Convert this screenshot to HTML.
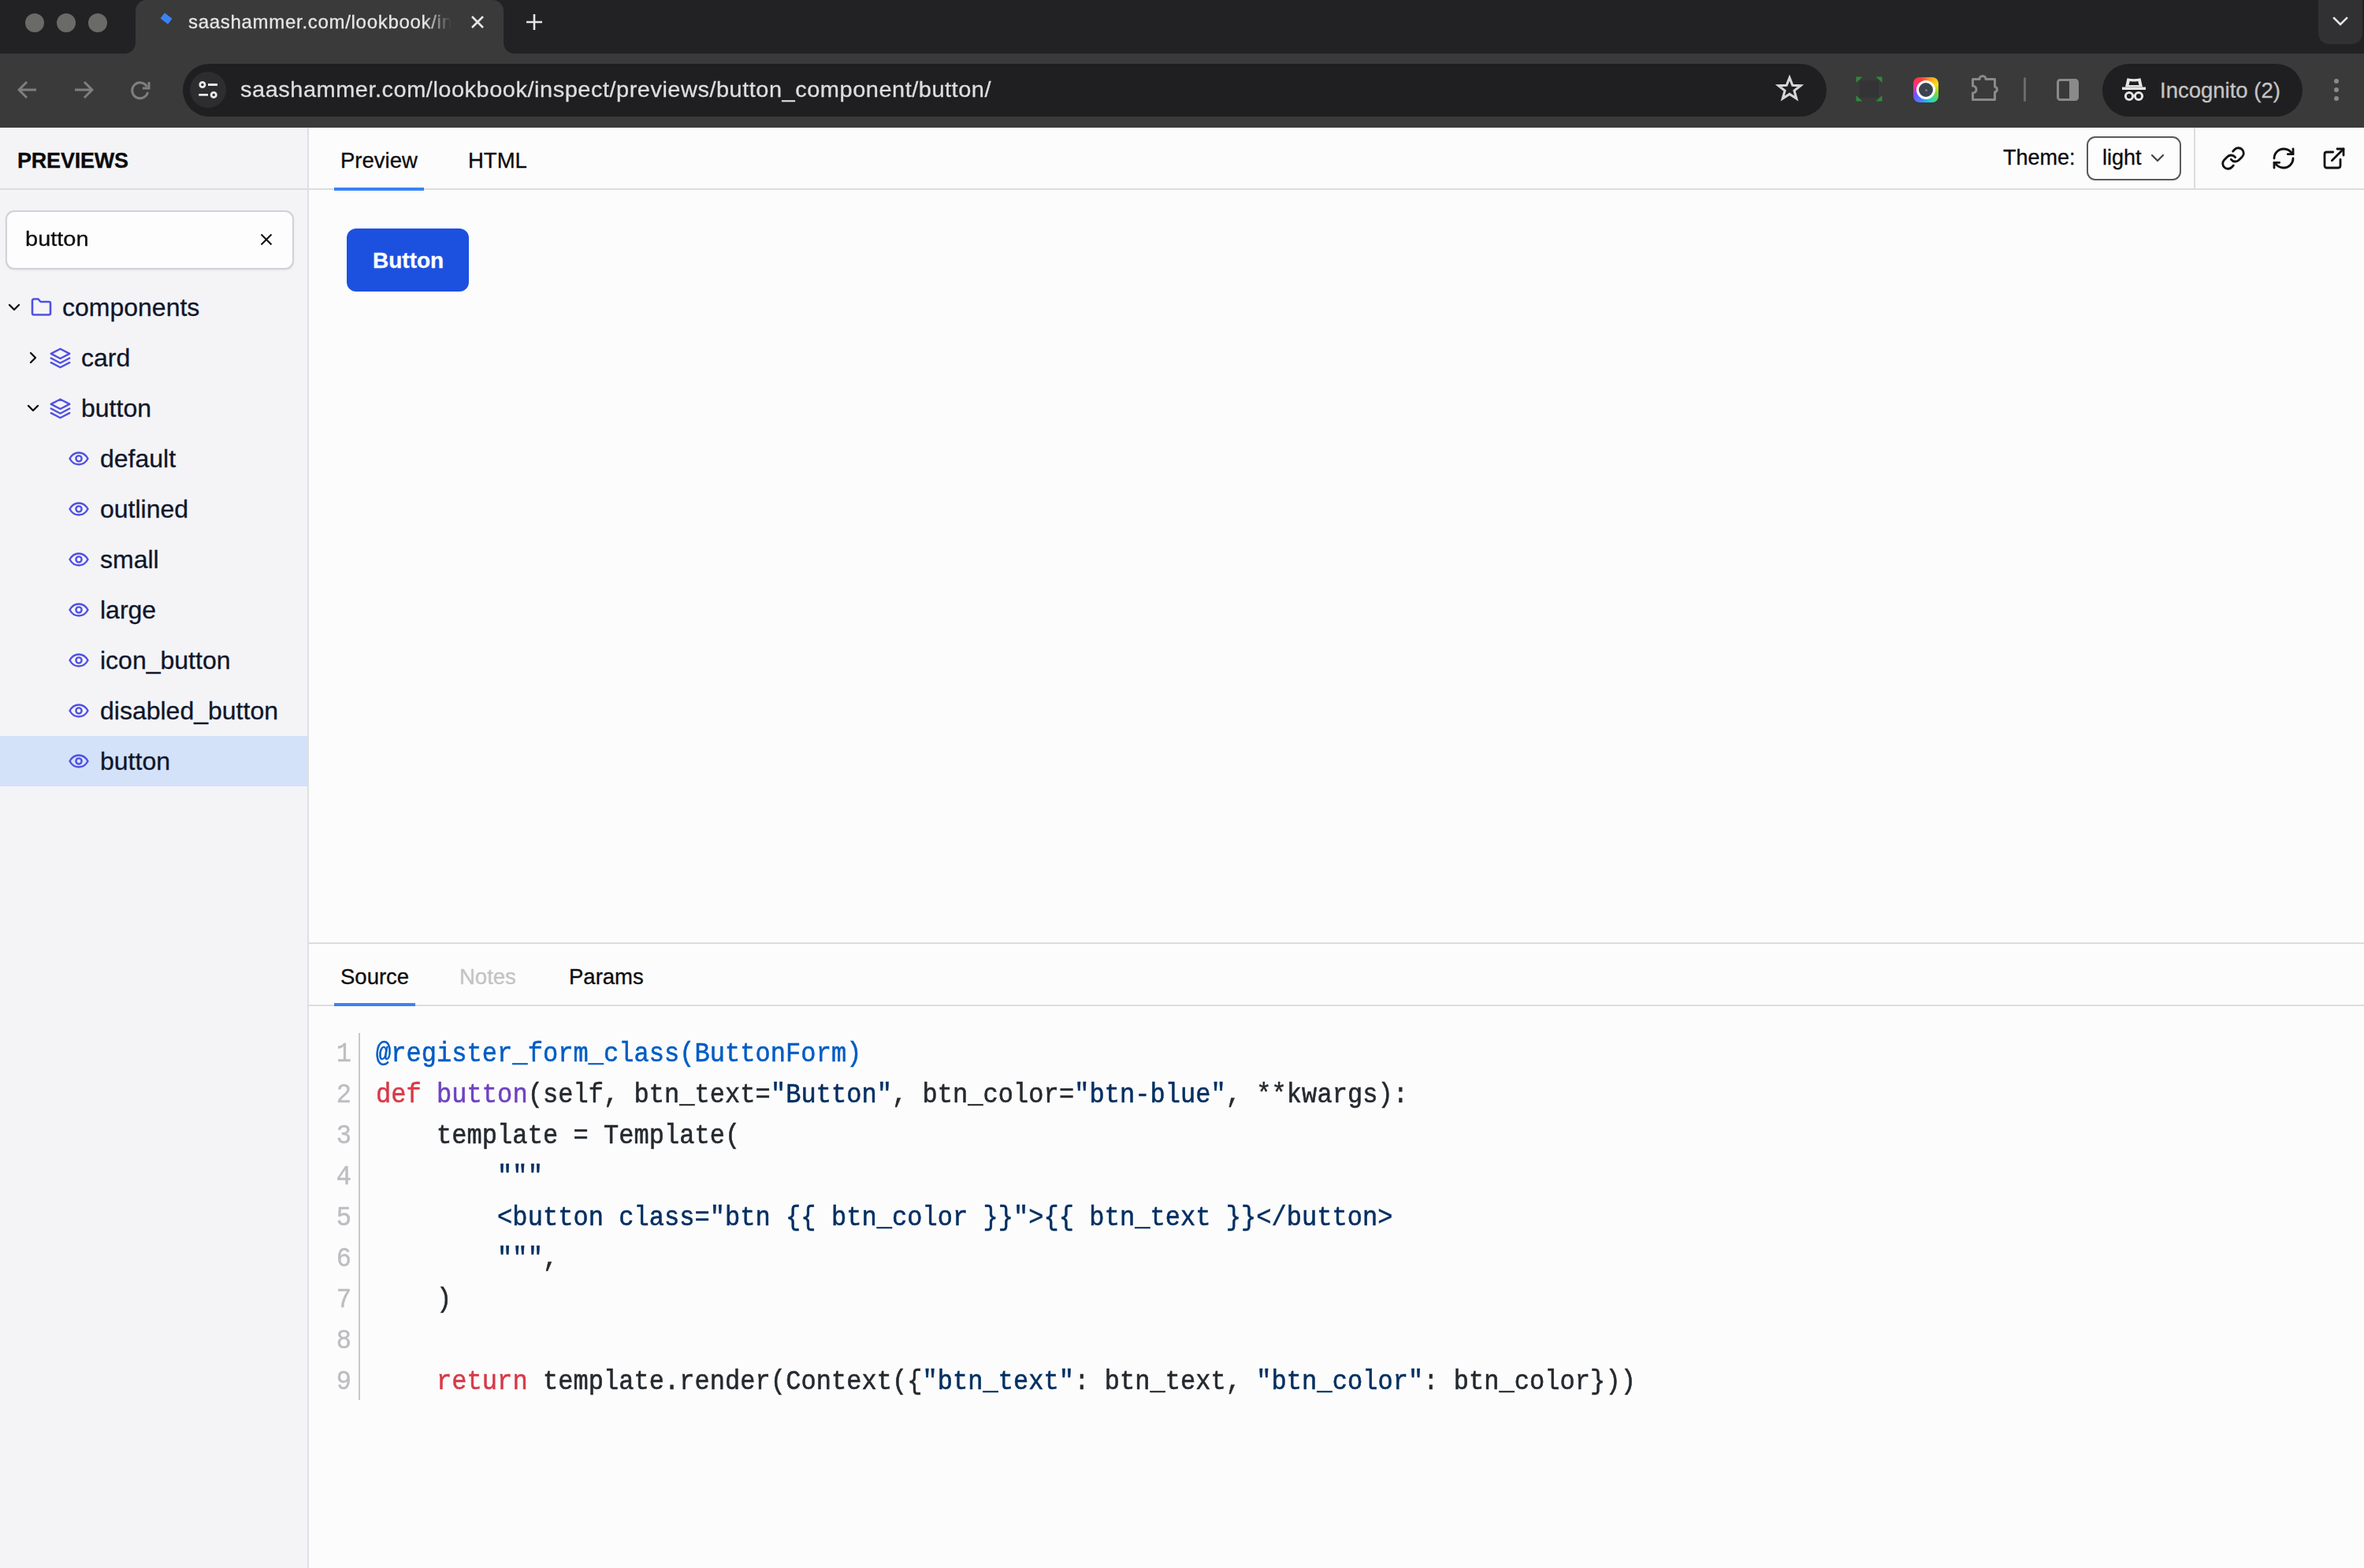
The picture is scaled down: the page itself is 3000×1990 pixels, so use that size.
<!DOCTYPE html>
<html><head><meta charset="utf-8">
<style>
*{box-sizing:border-box;margin:0;padding:0}
html,body{width:3000px;height:1990px;overflow:hidden;background:#fcfcfc;font-family:"Liberation Sans",sans-serif}
.r{position:absolute;display:block}
.t{position:absolute;white-space:nowrap;line-height:1;-webkit-text-stroke:0.3px currentColor}
</style></head>
<body>
<div class="r" style="left:0px;top:0px;width:3000px;height:68px;background:#222224;"></div>
<div class="r" style="left:0px;top:68px;width:3000px;height:94px;background:#3a3a3a;"></div>
<div class="r" style="left:172px;top:0px;width:467px;height:68px;background:#3a3a3a;border-radius:14px 14px 0 0"></div>
<div class="r" style="left:158px;top:50px;width:14px;height:18px;background:#3a3a3a;"></div>
<div class="r" style="left:156px;top:36px;width:16px;height:32px;background:#222224;border-bottom-right-radius:14px"></div>
<div class="r" style="left:639px;top:50px;width:14px;height:18px;background:#3a3a3a;"></div>
<div class="r" style="left:639px;top:36px;width:16px;height:32px;background:#222224;border-bottom-left-radius:14px"></div>
<div class="r" style="left:32px;top:17px;width:24px;height:24px;background:#6a6a68;border-radius:50%"></div>
<div class="r" style="left:72px;top:17px;width:24px;height:24px;background:#6a6a68;border-radius:50%"></div>
<div class="r" style="left:112px;top:17px;width:24px;height:24px;background:#6a6a68;border-radius:50%"></div>
<div class="r" style="left:205px;top:19px;width:12px;height:9px;background:#3b82f6;transform:rotate(38deg);border-radius:1px"></div>
<div class="t " style="left:239.0px;top:15.7px;font-size:24px;color:#e6e6e6;font-weight:normal;font-family:'Liberation Sans',sans-serif;width:336px;overflow:hidden;-webkit-mask-image:linear-gradient(90deg,#000 300px,transparent 334px);letter-spacing:0.7px">saashammer.com/lookbook/inspect</div>
<svg class="r" style="left:597px;top:19px;" width="18" height="18" viewBox="0 0 18 18" ><path d="M2 2L16 16M16 2L2 16" stroke="#e6e6e6" stroke-width="2.6" stroke-linecap="butt"/></svg>
<svg class="r" style="left:667px;top:17px;" width="22" height="22" viewBox="0 0 22 22" ><path d="M11 1V21M1 11H21" stroke="#e6e6e6" stroke-width="2.6"/></svg>
<div class="r" style="left:2942px;top:-14px;width:56px;height:70px;background:#313133;border-radius:14px"></div>
<svg class="r" style="left:2960px;top:21px;" width="20" height="14" viewBox="0 0 20 14" ><path d="M2 2L10 10L18 2" stroke="#e6e6e6" stroke-width="2.6" fill="none" stroke-linecap="square" stroke-linejoin="miter"/></svg>
<svg class="r" style="left:22px;top:102px;" width="26" height="24" viewBox="0 0 26 24" ><path d="M24 12H3M12 2L2 12L12 22" stroke="#7f7f7f" stroke-width="3" fill="none" stroke-linejoin="miter"/></svg>
<svg class="r" style="left:93px;top:102px;" width="26" height="24" viewBox="0 0 26 24" ><path d="M2 12H23M14 2L24 12L14 22" stroke="#7f7f7f" stroke-width="3" fill="none"/></svg>
<svg class="r" style="left:165px;top:101px;" width="27" height="26" viewBox="0 0 27 26" ><path d="M21.5 9A10 10 0 1 0 22.5 16" stroke="#7f7f7f" stroke-width="3" fill="none"/><path d="M24 3V11H16" stroke="#7f7f7f" stroke-width="3" fill="none"/></svg>
<div class="r" style="left:232px;top:81px;width:2086px;height:67px;background:#1f1f21;border-radius:34px"></div>
<div class="r" style="left:241px;top:91px;width:46px;height:46px;background:#2d2d2f;border-radius:50%"></div>
<svg class="r" style="left:248px;top:98px;" width="32" height="32" viewBox="0 0 32 32" ><circle cx="8.9" cy="9.5" r="3.1" stroke="#e8e8e8" stroke-width="2.8" fill="none"/><path d="M16 9.5H28M4.2 22.4H16" stroke="#e8e8e8" stroke-width="2.9"/><circle cx="23.2" cy="22.4" r="3.1" stroke="#e8e8e8" stroke-width="2.8" fill="none"/></svg>
<div class="t " style="left:305.0px;top:99.4px;font-size:29px;color:#dedede;font-weight:normal;font-family:'Liberation Sans',sans-serif;letter-spacing:0.5px;transform:scaleY(0.94);transform-origin:0 24.5px">saashammer.com/lookbook/inspect/previews/button_component/button/</div>
<svg class="r" style="left:2253px;top:95px;" width="36" height="35" viewBox="0 0 24 24" ><path d="M12 2.5L14.6 9.1L21.6 9.4L16.1 13.8L18 20.6L12 16.7L6 20.6L7.9 13.8L2.4 9.4L9.4 9.1Z" stroke="#d6d6d6" stroke-width="2.1" fill="none" stroke-linejoin="miter"/></svg>
<div class="r" style="left:2360px;top:102px;width:24px;height:22px;background:#343436;"></div>
<svg class="r" style="left:2355px;top:97px;" width="34" height="32" viewBox="0 0 34 32" ><path d="M0.5 0.5H8.5L0.5 8Z M33.5 0.5H25.5L33.5 8Z M0.5 31.5H8.5L0.5 24Z M33.5 31.5H25.5L33.5 24Z" fill="#2f8a3a"/></svg>
<div class="r" style="left:2428px;top:98px;width:32px;height:32px;background:conic-gradient(from 200deg, #3a8dff, #7a4dff, #ff2a8a, #ff3b3b, #ff9a1f, #f3e21a, #7ad93a, #1fd6c8, #3a8dff);border-radius:8px"></div>
<div class="r" style="left:2432px;top:102px;width:24px;height:24px;background:#3a4350;border-radius:50%;border:3px solid #ffffff"></div>
<div class="r" style="left:2442.5px;top:112.5px;width:3px;height:3px;background:#6b7a88;border-radius:50%"></div>
<svg class="r" style="left:2500px;top:95px;" width="36" height="34" viewBox="0 0 36 34" ><path d="M3.5 5.5H12A4 4 0 0 1 20 5.5H31.5V15A3.6 3.6 0 0 1 31.5 22V31.5H3.5V23A4.5 4.5 0 0 0 3.5 14Z" stroke="#8a8a8a" stroke-width="3" fill="none" stroke-linejoin="round"/></svg>
<div class="r" style="left:2568px;top:98px;width:3px;height:31px;background:#6a6a6a;border-radius:2px"></div>
<svg class="r" style="left:2609px;top:99px;" width="30" height="30" viewBox="0 0 30 30" ><rect x="2.5" y="2.5" width="25" height="25" rx="3" stroke="#8a8a8a" stroke-width="3" fill="none"/><path d="M17 2.5H24.5A3 3 0 0 1 27.5 5.5V24.5A3 3 0 0 1 24.5 27.5H17Z" fill="#8a8a8a"/></svg>
<div class="r" style="left:2668px;top:81px;width:254px;height:67px;background:#1f1f21;border-radius:34px"></div>
<svg class="r" style="left:2690px;top:97px;" width="36" height="34" viewBox="0 0 36 34" ><path d="M7 13.5L9.5 2.2Q18 4.2 26.5 2.2L29 13.5Z" fill="#e6e6e6"/><path d="M11.5 11L12.8 6Q18 7.2 23.2 6L24.5 11Z" fill="#1f1f21"/><rect x="3" y="13.5" width="30" height="3.5" fill="#e6e6e6"/><circle cx="12" cy="25" r="4.6" stroke="#e6e6e6" stroke-width="3" fill="none"/><circle cx="24" cy="25" r="4.6" stroke="#e6e6e6" stroke-width="3" fill="none"/><path d="M16 24.5H20" stroke="#e6e6e6" stroke-width="2.5"/></svg>
<div class="t " style="left:2741.0px;top:100.7px;font-size:27.5px;color:#c4c4c4;font-weight:normal;font-family:'Liberation Sans',sans-serif;">Incognito (2)</div>
<div class="r" style="left:2962px;top:100px;width:6px;height:6px;background:#8a8a8a;border-radius:50%"></div>
<div class="r" style="left:2962px;top:111px;width:6px;height:6px;background:#8a8a8a;border-radius:50%"></div>
<div class="r" style="left:2962px;top:122px;width:6px;height:6px;background:#8a8a8a;border-radius:50%"></div>
<div class="r" style="left:0px;top:162px;width:3000px;height:1828px;background:#fcfcfc;"></div>
<div class="r" style="left:0px;top:162px;width:390px;height:1828px;background:#f4f4f7;"></div>
<div class="r" style="left:390px;top:162px;width:2px;height:1828px;background:#dedfe3;"></div>
<div class="r" style="left:0px;top:239px;width:390px;height:2px;background:#dcdde0;"></div>
<div class="t " style="left:22.0px;top:191.1px;font-size:27px;color:#0b0b0b;font-weight:bold;font-family:'Liberation Sans',sans-serif;letter-spacing:-0.2px">PREVIEWS</div>
<div class="r" style="left:7px;top:267px;width:366px;height:75px;background:#fdfdfe;border:2px solid #cfd2d8;border-radius:11px;box-shadow:0 1px 2px rgba(0,0,0,0.08)"></div>
<div class="t " style="left:32.0px;top:288.4px;font-size:29px;color:#0b0b0b;font-weight:normal;font-family:'Liberation Sans',sans-serif;transform:scaleY(0.9);transform-origin:0 24.5px">button</div>
<svg class="r" style="left:330px;top:296px;" width="16" height="16" viewBox="0 0 16 16" ><path d="M1.5 1.5L14.5 14.5M14.5 1.5L1.5 14.5" stroke="#111" stroke-width="2.1"/></svg>
<div class="r" style="left:0px;top:934px;width:390px;height:64px;background:#d4e2f9;"></div>
<svg class="r" style="left:10px;top:385px;" width="16" height="10" viewBox="0 0 16 10" ><path d="M2 2L8 8L14 2" stroke="#111" stroke-width="2.4" fill="none" stroke-linecap="round" stroke-linejoin="round"/></svg>
<svg class="r" style="left:39px;top:378px;" width="27" height="23" viewBox="0 0 27 23" ><path d="M2 3.5A2 2 0 0 1 4 1.5H9.5L12.5 5H23A2 2 0 0 1 25 7V19.5A2 2 0 0 1 23 21.5H4A2 2 0 0 1 2 19.5Z" stroke="#5050e4" stroke-width="2.6" fill="none" stroke-linejoin="round"/></svg>
<div class="t " style="left:79.0px;top:373.9px;font-size:32px;color:#0f1629;font-weight:normal;font-family:'Liberation Sans',sans-serif;">components</div>
<svg class="r" style="left:37px;top:446px;" width="10" height="16" viewBox="0 0 10 16" ><path d="M2 2L8 8L2 14" stroke="#111" stroke-width="2.4" fill="none" stroke-linecap="round" stroke-linejoin="round"/></svg>
<svg class="r" style="left:63px;top:441px;" width="27" height="27" viewBox="0 0 24 24" ><path d="M12 1.5L1.5 7L12 12.5L22.5 7Z" stroke="#5050e4" stroke-width="2.1" fill="none" stroke-linejoin="round"/><path d="M1.5 17L12 22.5L22.5 17M1.5 12L12 17.5L22.5 12" stroke="#5050e4" stroke-width="2.1" fill="none" stroke-linejoin="round" stroke-linecap="round"/></svg>
<div class="t " style="left:103.0px;top:437.9px;font-size:32px;color:#0f1629;font-weight:normal;font-family:'Liberation Sans',sans-serif;">card</div>
<svg class="r" style="left:34px;top:513px;" width="16" height="10" viewBox="0 0 16 10" ><path d="M2 2L8 8L14 2" stroke="#111" stroke-width="2.4" fill="none" stroke-linecap="round" stroke-linejoin="round"/></svg>
<svg class="r" style="left:63px;top:505px;" width="27" height="27" viewBox="0 0 24 24" ><path d="M12 1.5L1.5 7L12 12.5L22.5 7Z" stroke="#5050e4" stroke-width="2.1" fill="none" stroke-linejoin="round"/><path d="M1.5 17L12 22.5L22.5 17M1.5 12L12 17.5L22.5 12" stroke="#5050e4" stroke-width="2.1" fill="none" stroke-linejoin="round" stroke-linecap="round"/></svg>
<div class="t " style="left:103.0px;top:501.9px;font-size:32px;color:#0f1629;font-weight:normal;font-family:'Liberation Sans',sans-serif;">button</div>
<svg class="r" style="left:87px;top:573px;" width="26" height="18" viewBox="0 0 26 18" ><path d="M1.5 9C4.5 3.5 8.5 1.5 13 1.5S21.5 3.5 24.5 9C21.5 14.5 17.5 16.5 13 16.5S4.5 14.5 1.5 9Z" stroke="#5050e4" stroke-width="2.4" fill="none"/><circle cx="13" cy="9" r="3.6" stroke="#5050e4" stroke-width="2.4" fill="none"/></svg>
<div class="t " style="left:127.0px;top:565.9px;font-size:32px;color:#0f1629;font-weight:normal;font-family:'Liberation Sans',sans-serif;">default</div>
<svg class="r" style="left:87px;top:637px;" width="26" height="18" viewBox="0 0 26 18" ><path d="M1.5 9C4.5 3.5 8.5 1.5 13 1.5S21.5 3.5 24.5 9C21.5 14.5 17.5 16.5 13 16.5S4.5 14.5 1.5 9Z" stroke="#5050e4" stroke-width="2.4" fill="none"/><circle cx="13" cy="9" r="3.6" stroke="#5050e4" stroke-width="2.4" fill="none"/></svg>
<div class="t " style="left:127.0px;top:629.9px;font-size:32px;color:#0f1629;font-weight:normal;font-family:'Liberation Sans',sans-serif;">outlined</div>
<svg class="r" style="left:87px;top:701px;" width="26" height="18" viewBox="0 0 26 18" ><path d="M1.5 9C4.5 3.5 8.5 1.5 13 1.5S21.5 3.5 24.5 9C21.5 14.5 17.5 16.5 13 16.5S4.5 14.5 1.5 9Z" stroke="#5050e4" stroke-width="2.4" fill="none"/><circle cx="13" cy="9" r="3.6" stroke="#5050e4" stroke-width="2.4" fill="none"/></svg>
<div class="t " style="left:127.0px;top:693.9px;font-size:32px;color:#0f1629;font-weight:normal;font-family:'Liberation Sans',sans-serif;">small</div>
<svg class="r" style="left:87px;top:765px;" width="26" height="18" viewBox="0 0 26 18" ><path d="M1.5 9C4.5 3.5 8.5 1.5 13 1.5S21.5 3.5 24.5 9C21.5 14.5 17.5 16.5 13 16.5S4.5 14.5 1.5 9Z" stroke="#5050e4" stroke-width="2.4" fill="none"/><circle cx="13" cy="9" r="3.6" stroke="#5050e4" stroke-width="2.4" fill="none"/></svg>
<div class="t " style="left:127.0px;top:757.9px;font-size:32px;color:#0f1629;font-weight:normal;font-family:'Liberation Sans',sans-serif;">large</div>
<svg class="r" style="left:87px;top:829px;" width="26" height="18" viewBox="0 0 26 18" ><path d="M1.5 9C4.5 3.5 8.5 1.5 13 1.5S21.5 3.5 24.5 9C21.5 14.5 17.5 16.5 13 16.5S4.5 14.5 1.5 9Z" stroke="#5050e4" stroke-width="2.4" fill="none"/><circle cx="13" cy="9" r="3.6" stroke="#5050e4" stroke-width="2.4" fill="none"/></svg>
<div class="t " style="left:127.0px;top:821.9px;font-size:32px;color:#0f1629;font-weight:normal;font-family:'Liberation Sans',sans-serif;">icon_button</div>
<svg class="r" style="left:87px;top:893px;" width="26" height="18" viewBox="0 0 26 18" ><path d="M1.5 9C4.5 3.5 8.5 1.5 13 1.5S21.5 3.5 24.5 9C21.5 14.5 17.5 16.5 13 16.5S4.5 14.5 1.5 9Z" stroke="#5050e4" stroke-width="2.4" fill="none"/><circle cx="13" cy="9" r="3.6" stroke="#5050e4" stroke-width="2.4" fill="none"/></svg>
<div class="t " style="left:127.0px;top:885.9px;font-size:32px;color:#0f1629;font-weight:normal;font-family:'Liberation Sans',sans-serif;">disabled_button</div>
<svg class="r" style="left:87px;top:957px;" width="26" height="18" viewBox="0 0 26 18" ><path d="M1.5 9C4.5 3.5 8.5 1.5 13 1.5S21.5 3.5 24.5 9C21.5 14.5 17.5 16.5 13 16.5S4.5 14.5 1.5 9Z" stroke="#5050e4" stroke-width="2.4" fill="none"/><circle cx="13" cy="9" r="3.6" stroke="#5050e4" stroke-width="2.4" fill="none"/></svg>
<div class="t " style="left:127.0px;top:949.9px;font-size:32px;color:#0f1629;font-weight:normal;font-family:'Liberation Sans',sans-serif;">button</div>
<div class="r" style="left:392px;top:239px;width:2608px;height:2px;background:#dcdde0;"></div>
<div class="t " style="left:432.0px;top:190.2px;font-size:27.5px;color:#0b0b0b;font-weight:normal;font-family:'Liberation Sans',sans-serif;">Preview</div>
<div class="r" style="left:424px;top:238px;width:114px;height:4px;background:#3b82f6;"></div>
<div class="t " style="left:594.0px;top:190.2px;font-size:27.5px;color:#0b0b0b;font-weight:normal;font-family:'Liberation Sans',sans-serif;">HTML</div>
<div class="t " style="left:2542.0px;top:186.6px;font-size:27px;color:#0b0b0b;font-weight:normal;font-family:'Liberation Sans',sans-serif;">Theme:</div>
<div class="r" style="left:2648px;top:173px;width:120px;height:56px;background:#fdfdfd;border:2px solid #5a5a5a;border-radius:11px"></div>
<div class="t " style="left:2668.0px;top:186.6px;font-size:27px;color:#0b0b0b;font-weight:normal;font-family:'Liberation Sans',sans-serif;">light</div>
<svg class="r" style="left:2729px;top:195px;" width="18" height="12" viewBox="0 0 18 12" ><path d="M2 2L9 9L16 2" stroke="#444" stroke-width="2.2" fill="none" stroke-linecap="round" stroke-linejoin="round"/></svg>
<div class="r" style="left:2784px;top:162px;width:2px;height:78px;background:#dcdde0;"></div>
<svg class="r" style="left:2818px;top:185px;" width="32" height="32" viewBox="0 0 24 24" ><path d="M10 13a5 5 0 0 0 7.54.54l3-3a5 5 0 0 0-7.07-7.07l-1.72 1.71" stroke="#111" stroke-width="2.1" fill="none" stroke-linecap="round" stroke-linejoin="round"/><path d="M14 11a5 5 0 0 0-7.54-.54l-3 3a5 5 0 0 0 7.07 7.07l1.71-1.71" stroke="#111" stroke-width="2.1" fill="none" stroke-linecap="round" stroke-linejoin="round"/></svg>
<svg class="r" style="left:2882px;top:185px;" width="32" height="32" viewBox="0 0 24 24" ><path d="M3 12a9 9 0 0 1 9-9 9.75 9.75 0 0 1 6.74 2.74L21 8" stroke="#111" stroke-width="2.1" fill="none" stroke-linecap="round" stroke-linejoin="round"/><path d="M21 3v5h-5" stroke="#111" stroke-width="2.1" fill="none" stroke-linecap="round" stroke-linejoin="round"/><path d="M21 12a9 9 0 0 1-9 9 9.75 9.75 0 0 1-6.74-2.74L3 16" stroke="#111" stroke-width="2.1" fill="none" stroke-linecap="round" stroke-linejoin="round"/><path d="M8 16H3v5" stroke="#111" stroke-width="2.1" fill="none" stroke-linecap="round" stroke-linejoin="round"/></svg>
<svg class="r" style="left:2946px;top:185px;" width="32" height="32" viewBox="0 0 24 24" ><path d="M15 3h6v6" stroke="#111" stroke-width="2.1" fill="none" stroke-linecap="round" stroke-linejoin="round"/><path d="M10 14 21 3" stroke="#111" stroke-width="2.1" fill="none" stroke-linecap="round" stroke-linejoin="round"/><path d="M18 13v6a2 2 0 0 1-2 2H5a2 2 0 0 1-2-2V8a2 2 0 0 1 2-2h6" stroke="#111" stroke-width="2.1" fill="none" stroke-linecap="round" stroke-linejoin="round"/></svg>
<div class="r" style="left:440px;top:290px;width:155px;height:80px;background:#1c51e0;border-radius:12px"></div>
<div class="t " style="left:473.0px;top:316.8px;font-size:28px;color:#ffffff;font-weight:bold;font-family:'Liberation Sans',sans-serif;">Button</div>
<div class="r" style="left:392px;top:1196px;width:2608px;height:2px;background:#dcdde0;"></div>
<div class="r" style="left:392px;top:1275px;width:2608px;height:2px;background:#dcdde0;"></div>
<div class="t " style="left:432.0px;top:1225.7px;font-size:27.5px;color:#0b0b0b;font-weight:normal;font-family:'Liberation Sans',sans-serif;">Source</div>
<div class="t " style="left:583.0px;top:1225.7px;font-size:27.5px;color:#c3c3c3;font-weight:normal;font-family:'Liberation Sans',sans-serif;">Notes</div>
<div class="t " style="left:722.0px;top:1225.7px;font-size:27.5px;color:#0b0b0b;font-weight:normal;font-family:'Liberation Sans',sans-serif;">Params</div>
<div class="r" style="left:424px;top:1273px;width:103px;height:4px;background:#3b82f6;"></div>
<div class="r" style="left:455px;top:1311px;width:2px;height:466px;background:#c8c8c8;"></div>
<div class="t " style="left:426.0px;top:1323.0px;font-size:32px;color:#bdbdc2;font-weight:normal;font-family:'Liberation Mono',monospace;width:20px;text-align:right;transform:scaleY(1.08);transform-origin:0 24.5px;-webkit-text-stroke:0.4px #bdbdc2">1</div>
<div class="t " style="left:477.0px;top:1323.0px;font-size:32px;color:#24292e;font-weight:normal;font-family:'Liberation Mono',monospace;white-space:pre;letter-spacing:0.06px;transform:scaleY(1.07);transform-origin:0 24.5px;-webkit-text-stroke:0.5px currentColor"><span style="color:#005cc5">@register_form_class(ButtonForm)</span></div>
<div class="t " style="left:426.0px;top:1375.0px;font-size:32px;color:#bdbdc2;font-weight:normal;font-family:'Liberation Mono',monospace;width:20px;text-align:right;transform:scaleY(1.08);transform-origin:0 24.5px;-webkit-text-stroke:0.4px #bdbdc2">2</div>
<div class="t " style="left:477.0px;top:1375.0px;font-size:32px;color:#24292e;font-weight:normal;font-family:'Liberation Mono',monospace;white-space:pre;letter-spacing:0.06px;transform:scaleY(1.07);transform-origin:0 24.5px;-webkit-text-stroke:0.5px currentColor"><span style="color:#d73a49">def</span> <span style="color:#6f42c1">button</span><span style="color:#24292e">(self, btn_text=</span><span style="color:#032f62">"Button"</span><span style="color:#24292e">, btn_color=</span><span style="color:#032f62">"btn-blue"</span><span style="color:#24292e">, **kwargs):</span></div>
<div class="t " style="left:426.0px;top:1427.0px;font-size:32px;color:#bdbdc2;font-weight:normal;font-family:'Liberation Mono',monospace;width:20px;text-align:right;transform:scaleY(1.08);transform-origin:0 24.5px;-webkit-text-stroke:0.4px #bdbdc2">3</div>
<div class="t " style="left:477.0px;top:1427.0px;font-size:32px;color:#24292e;font-weight:normal;font-family:'Liberation Mono',monospace;white-space:pre;letter-spacing:0.06px;transform:scaleY(1.07);transform-origin:0 24.5px;-webkit-text-stroke:0.5px currentColor"><span style="color:#24292e">    template = Template(</span></div>
<div class="t " style="left:426.0px;top:1479.0px;font-size:32px;color:#bdbdc2;font-weight:normal;font-family:'Liberation Mono',monospace;width:20px;text-align:right;transform:scaleY(1.08);transform-origin:0 24.5px;-webkit-text-stroke:0.4px #bdbdc2">4</div>
<div class="t " style="left:477.0px;top:1479.0px;font-size:32px;color:#24292e;font-weight:normal;font-family:'Liberation Mono',monospace;white-space:pre;letter-spacing:0.06px;transform:scaleY(1.07);transform-origin:0 24.5px;-webkit-text-stroke:0.5px currentColor"><span style="color:#032f62">        """</span></div>
<div class="t " style="left:426.0px;top:1531.0px;font-size:32px;color:#bdbdc2;font-weight:normal;font-family:'Liberation Mono',monospace;width:20px;text-align:right;transform:scaleY(1.08);transform-origin:0 24.5px;-webkit-text-stroke:0.4px #bdbdc2">5</div>
<div class="t " style="left:477.0px;top:1531.0px;font-size:32px;color:#24292e;font-weight:normal;font-family:'Liberation Mono',monospace;white-space:pre;letter-spacing:0.06px;transform:scaleY(1.07);transform-origin:0 24.5px;-webkit-text-stroke:0.5px currentColor"><span style="color:#032f62">        &lt;button class="btn {{ btn_color }}"&gt;{{ btn_text }}&lt;/button&gt;</span></div>
<div class="t " style="left:426.0px;top:1583.0px;font-size:32px;color:#bdbdc2;font-weight:normal;font-family:'Liberation Mono',monospace;width:20px;text-align:right;transform:scaleY(1.08);transform-origin:0 24.5px;-webkit-text-stroke:0.4px #bdbdc2">6</div>
<div class="t " style="left:477.0px;top:1583.0px;font-size:32px;color:#24292e;font-weight:normal;font-family:'Liberation Mono',monospace;white-space:pre;letter-spacing:0.06px;transform:scaleY(1.07);transform-origin:0 24.5px;-webkit-text-stroke:0.5px currentColor"><span style="color:#032f62">        """</span><span style="color:#24292e">,</span></div>
<div class="t " style="left:426.0px;top:1635.0px;font-size:32px;color:#bdbdc2;font-weight:normal;font-family:'Liberation Mono',monospace;width:20px;text-align:right;transform:scaleY(1.08);transform-origin:0 24.5px;-webkit-text-stroke:0.4px #bdbdc2">7</div>
<div class="t " style="left:477.0px;top:1635.0px;font-size:32px;color:#24292e;font-weight:normal;font-family:'Liberation Mono',monospace;white-space:pre;letter-spacing:0.06px;transform:scaleY(1.07);transform-origin:0 24.5px;-webkit-text-stroke:0.5px currentColor"><span style="color:#24292e">    )</span></div>
<div class="t " style="left:426.0px;top:1687.0px;font-size:32px;color:#bdbdc2;font-weight:normal;font-family:'Liberation Mono',monospace;width:20px;text-align:right;transform:scaleY(1.08);transform-origin:0 24.5px;-webkit-text-stroke:0.4px #bdbdc2">8</div>
<div class="t " style="left:477.0px;top:1687.0px;font-size:32px;color:#24292e;font-weight:normal;font-family:'Liberation Mono',monospace;white-space:pre;letter-spacing:0.06px;transform:scaleY(1.07);transform-origin:0 24.5px;-webkit-text-stroke:0.5px currentColor"></div>
<div class="t " style="left:426.0px;top:1739.0px;font-size:32px;color:#bdbdc2;font-weight:normal;font-family:'Liberation Mono',monospace;width:20px;text-align:right;transform:scaleY(1.08);transform-origin:0 24.5px;-webkit-text-stroke:0.4px #bdbdc2">9</div>
<div class="t " style="left:477.0px;top:1739.0px;font-size:32px;color:#24292e;font-weight:normal;font-family:'Liberation Mono',monospace;white-space:pre;letter-spacing:0.06px;transform:scaleY(1.07);transform-origin:0 24.5px;-webkit-text-stroke:0.5px currentColor"><span style="color:#24292e">    </span><span style="color:#d73a49">return</span><span style="color:#24292e"> template.render(Context({</span><span style="color:#032f62">"btn_text"</span><span style="color:#24292e">: btn_text, </span><span style="color:#032f62">"btn_color"</span><span style="color:#24292e">: btn_color}))</span></div>
</body></html>
